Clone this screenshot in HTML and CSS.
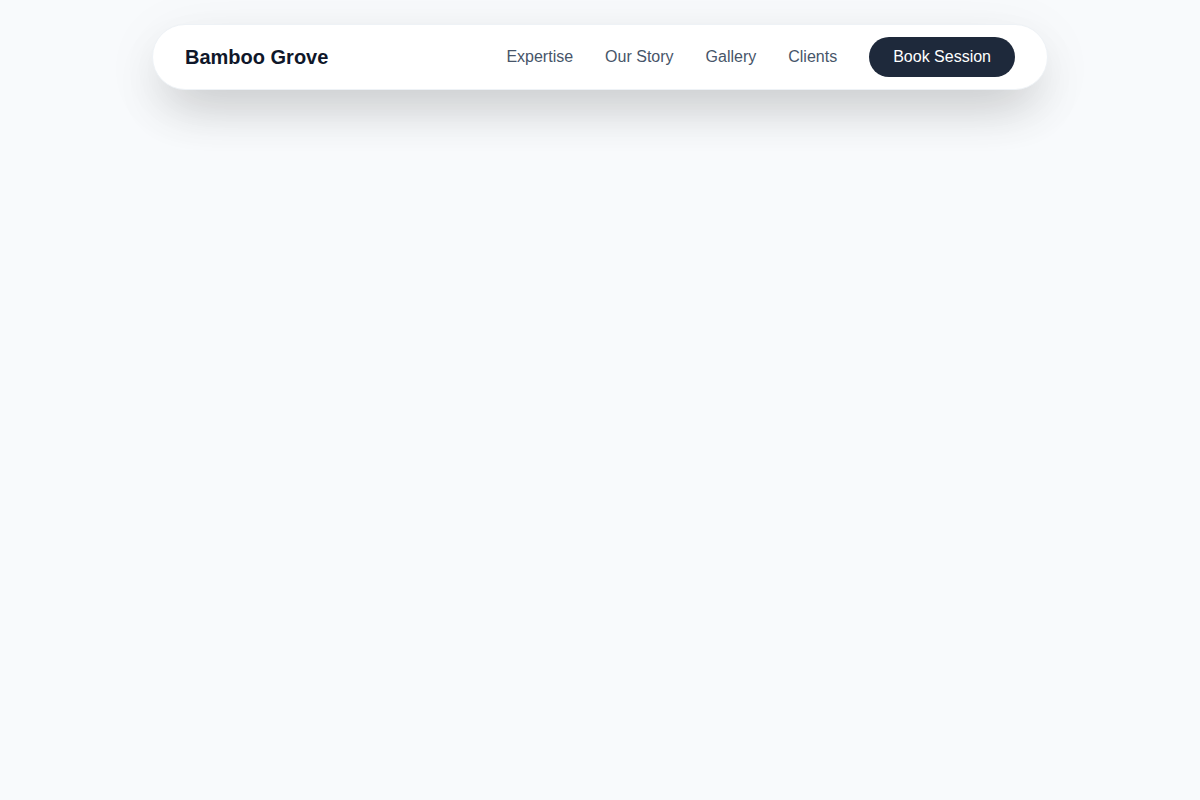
FILE: index.html
```html
<!DOCTYPE html>
<html lang="en">
<head>
<meta charset="utf-8">
<title>Bamboo Grove</title>
<link rel="stylesheet" href="styles.css">
</head>
<body>
<header class="wrap">
  <nav class="nav">
    <a class="logo" href="#">Bamboo Grove</a>
    <div class="links">
      <a class="link" href="#">Expertise</a>
      <a class="link" href="#">Our Story</a>
      <a class="link" href="#">Gallery</a>
      <a class="link" href="#">Clients</a>
      <a class="cta" href="#">Book Session</a>
    </div>
  </nav>
</header>
</body>
</html>
```
FILE: styles.css
```css
* { box-sizing: border-box; }
html, body { margin: 0; padding: 0; }
body {
  background: #f8fafc;
  font-family: "Liberation Sans", Arial, sans-serif;
  min-height: 800px;
}
.wrap {
  padding-top: 24px;
  display: flex;
  justify-content: center;
}
.nav {
  width: 896px;
  display: flex;
  align-items: center;
  justify-content: space-between;
  padding: 12px 32px;
  background: #ffffff;
  border: 1px solid #eef2f6;
  border-radius: 9999px;
  box-shadow: 0 25px 50px -12px rgba(0, 0, 0, 0.2), 0 12px 64px rgba(0, 0, 0, 0.06);
}
.logo {
  font-size: 20px;
  font-weight: 700;
  color: #0f172a;
  text-decoration: none;
}
.links {
  display: flex;
  align-items: center;
  gap: 32px;
}
.link {
  font-size: 16px;
  color: #475569;
  text-decoration: none;
}
.cta {
  display: inline-flex;
  align-items: center;
  height: 40px;
  padding: 0 24px;
  border-radius: 9999px;
  background: #1e293b;
  color: #ffffff;
  font-size: 16px;
  text-decoration: none;
}
```
